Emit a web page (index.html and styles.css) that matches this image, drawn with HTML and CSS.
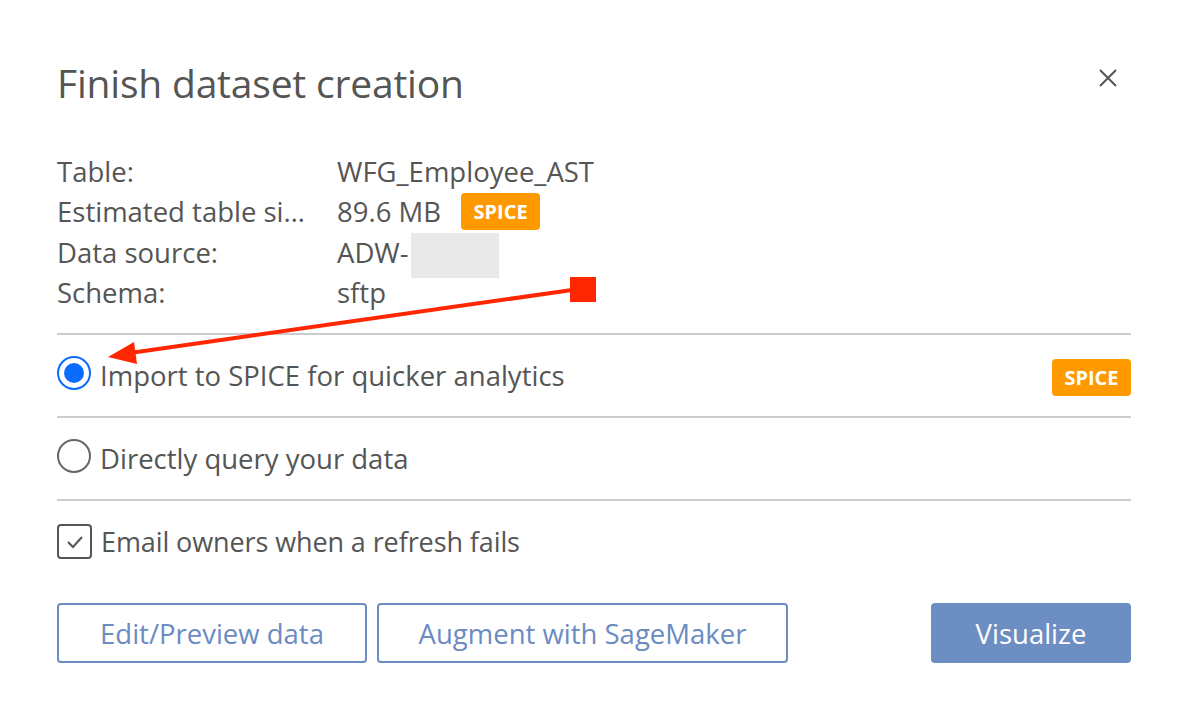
FILE: index.html
```html
<!DOCTYPE html>
<html lang="en">
<head>
    <meta charset="UTF-8">
    <meta name="viewport" content="width=device-width, initial-scale=1.0">
    <title>Finish dataset creation</title>
    <link rel="stylesheet" href="styles.css">
</head>
<body>

<div class="dialog">
    <div class="dialog-header">
        <h1>Finish dataset creation</h1>
        <button class="close-btn" type="button" aria-label="Close">
            <svg width="18" height="18" viewBox="0 0 18 18"><path d="M1 1 L17 17 M17 1 L1 17" stroke="#555" stroke-width="2" fill="none"/></svg>
        </button>
    </div>

    <div class="details">
        <div class="label">Table:</div>
        <div class="value">WFG_Employee_AST</div>
        <div class="label">Estimated table si…</div>
        <div class="value">89.6 MB <span class="badge">SPICE</span></div>
        <div class="label">Data source:</div>
        <div class="value">ADW-<span class="redacted"></span></div>
        <div class="label">Schema:</div>
        <div class="value">sftp</div>
    </div>

    <div class="option-row">
        <label class="option">
            <span class="radio checked"></span>
            Import to SPICE for quicker analytics
        </label>
        <span class="badge badge-row">SPICE</span>
    </div>
    <div class="option-row">
        <label class="option">
            <span class="radio"></span>
            Directly query your data
        </label>
    </div>

    <div class="check-row">
        <label class="option option-check">
            <span class="checkbox">
                <svg width="18" height="14" viewBox="0 0 18 14"><path d="M2 7 L7 12 L16 2" stroke="#555" stroke-width="2" fill="none"/></svg>
            </span>
            Email owners when a refresh fails
        </label>
    </div>

    <div class="actions">
        <div class="actions-left">
            <button class="btn btn-outline" type="button">Edit/Preview data</button>
            <button class="btn btn-outline btn-wide" type="button">Augment with SageMaker</button>
        </div>
        <button class="btn btn-primary" type="button">Visualize</button>
    </div>

    <!-- annotation drawn over the screenshot -->
    <svg class="annotation" width="1192" height="714" viewBox="0 0 1192 714">
        <line x1="572" y1="290" x2="130" y2="353" stroke="#ff2600" stroke-width="4"/>
        <polygon points="108,357 134,342 137,364" fill="#ff2600"/>
        <rect x="570" y="277" width="26" height="25" fill="#ff2600"/>
    </svg>
</div>

</body>
</html>
```

FILE: styles.css
```css
body {
    font-family: "Open Sans", "Noto Sans", sans-serif;
    background-color: #fff;
    color: #555;
    margin: 0;
}
.dialog {
    position: relative;
    width: 1192px;
    height: 714px;
    box-sizing: border-box;
    padding: 55px 61px 0 57px;
}
.dialog-header {
    display: flex;
    justify-content: space-between;
    align-items: center;
    height: 54px;
}
.dialog-header h1 {
    margin: 0;
    font-size: 39px;
    font-weight: 400;
    color: #555;
    letter-spacing: -0.2px;
}
.close-btn {
    background: none;
    border: none;
    padding: 0;
    margin-right: 14px;
    margin-top: -8px;
    width: 18px;
    height: 18px;
    cursor: pointer;
}
.details {
    display: grid;
    grid-template-columns: 280px auto;
    grid-auto-rows: 40.5px;
    align-items: center;
    margin-top: 42px;
    font-size: 27.5px;
}
.details .value {
    display: flex;
    align-items: center;
}
.badge {
    display: inline-flex;
    align-items: center;
    justify-content: center;
    width: 79px;
    height: 37px;
    background-color: #ff9900;
    color: #fff;
    font-weight: 700;
    font-size: 20px;
    border-radius: 4px;
    margin-left: 20px;
}
.badge-row {
    margin-top: 4px;
}
.redacted {
    display: inline-block;
    width: 88px;
    height: 45px;
    background-color: #e9e9e9;
    margin-top: 6px;
    margin-left: 2px;
}
.option-row {
    display: flex;
    justify-content: space-between;
    align-items: center;
    height: 81px;
    border-top: 2px solid #ccc;
    margin-top: 20px;
}
.option-row + .option-row {
    margin-top: 0;
}
.check-row {
    display: flex;
    align-items: center;
    height: 89px;
    padding-bottom: 6px;
    box-sizing: border-box;
    border-top: 2px solid #ccc;
}
.option {
    display: flex;
    align-items: center;
    gap: 9px;
    font-size: 27.5px;
    color: #555;
}
.option-check {
    font-size: 27px;
    letter-spacing: -0.1px;
}
.radio {
    width: 30px;
    height: 30px;
    border: 2px solid #666;
    border-radius: 50%;
    box-sizing: content-box;
    position: relative;
    margin-top: -6px;
}
.radio.checked {
    border-color: #0a6cff;
}
.radio.checked::after {
    content: "";
    position: absolute;
    left: 5px;
    top: 5px;
    width: 20px;
    height: 20px;
    border-radius: 50%;
    background-color: #0a6cff;
}
.checkbox {
    width: 31px;
    height: 31px;
    border: 2px solid #555;
    border-radius: 4px;
    display: flex;
    align-items: center;
    justify-content: center;
    margin-top: 0;
}
.actions {
    display: flex;
    justify-content: space-between;
    margin-top: 15px;
}
.actions-left {
    display: flex;
    gap: 10px;
}
.btn {
    height: 60px;
    font-family: "Open Sans", "Noto Sans", sans-serif;
    font-size: 27.5px;
    border-radius: 4px;
    cursor: pointer;
    padding: 0;
}
.btn-outline {
    width: 310px;
    background-color: #fff;
    border: 2px solid #6b8bc1;
    color: #6b8bc1;
}
.btn-wide {
    width: 411px;
}
.btn-primary {
    width: 200px;
    background-color: #6d8ec2;
    border: none;
    color: #fff;
}
.annotation {
    position: absolute;
    left: 0;
    top: 0;
    pointer-events: none;
}
```
